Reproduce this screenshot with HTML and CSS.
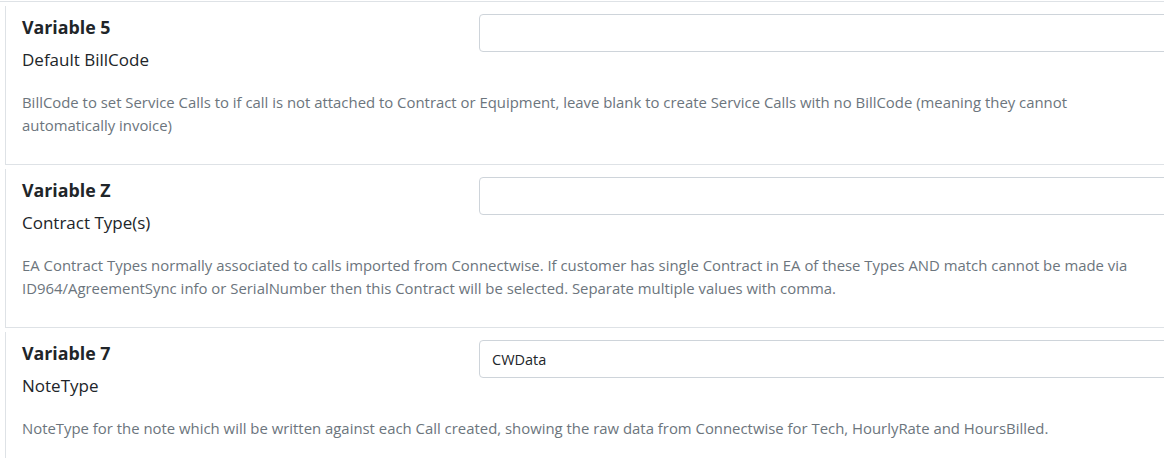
FILE: index.html
```html
<!DOCTYPE html>
<html lang="en">
<head>
<meta charset="utf-8">
<title>Variables</title>
<link rel="stylesheet" href="styles.css">
</head>
<body>
<div class="page">
  <div class="card-prev"></div>

  <div class="card">
    <div class="card-top">
      <div class="labels">
        <div class="title">Variable 5</div>
        <div class="subtitle">Default BillCode</div>
      </div>
      <div class="field"><input class="input" type="text" value=""></div>
    </div>
    <p class="desc">BillCode to set Service Calls to if call is not attached to Contract or Equipment, leave blank to create Service Calls with no BillCode (meaning they cannot automatically invoice)</p>
  </div>

  <div class="card">
    <div class="card-top">
      <div class="labels">
        <div class="title">Variable Z</div>
        <div class="subtitle">Contract Type(s)</div>
      </div>
      <div class="field"><input class="input" type="text" value=""></div>
    </div>
    <p class="desc">EA Contract Types normally associated to calls imported from Connectwise. If customer has single Contract in EA of these Types AND match cannot be made via ID964/AgreementSync info or SerialNumber then this Contract will be selected. Separate multiple values with comma.</p>
  </div>

  <div class="card">
    <div class="card-top">
      <div class="labels">
        <div class="title">Variable 7</div>
        <div class="subtitle">NoteType</div>
      </div>
      <div class="field"><input class="input" type="text" value="CWData"></div>
    </div>
    <p class="desc">NoteType for the note which will be written against each Call created, showing the raw data from Connectwise for Tech, HourlyRate and HoursBilled.</p>
  </div>
</div>
</body>
</html>
```
FILE: styles.css
```css
html, body {
  margin: 0;
  padding: 0;
  background: #ffffff;
  overflow: hidden;
}
body {
  font-family: "Segoe UI", "Open Sans", "Noto Sans", sans-serif;
  color: #212529;
}
.page {
  width: 1200px;
  display: flex;
  flex-direction: column;
  gap: 4px;
}
.card-prev {
  height: 1px;
  border-bottom: 1px solid #dee2e6;
}
.card {
  margin-left: 5px;
  border-left: 1px solid #dee2e6;
  border-bottom: 1px solid #dee2e6;
  padding: 0 16px;
  height: 158px;
  box-sizing: content-box;
  flex: 0 0 auto;
}
.card-top {
  display: grid;
  grid-template-columns: 457px 1fr;
}
.title {
  margin-top: 10px;
  font-size: 17.8px;
  line-height: 22px;
  font-weight: 700;
}
.subtitle {
  margin-top: 9px;
  font-size: 17px;
  line-height: 25px;
}
.field {
  padding-top: 8px;
}
.input {
  display: block;
  width: 100%;
  height: 38px;
  box-sizing: border-box;
  border: 1px solid #ced4da;
  border-radius: 4px;
  padding: 0 12px;
  font-family: inherit;
  font-size: 14.5px;
  color: #212529;
  background: #fff;
  outline: none;
}
.desc {
  margin: 19px 0 0 0;
  max-width: 1138px;
  font-size: 14.9px;
  line-height: 23px;
  color: #6c757d;
}
```
